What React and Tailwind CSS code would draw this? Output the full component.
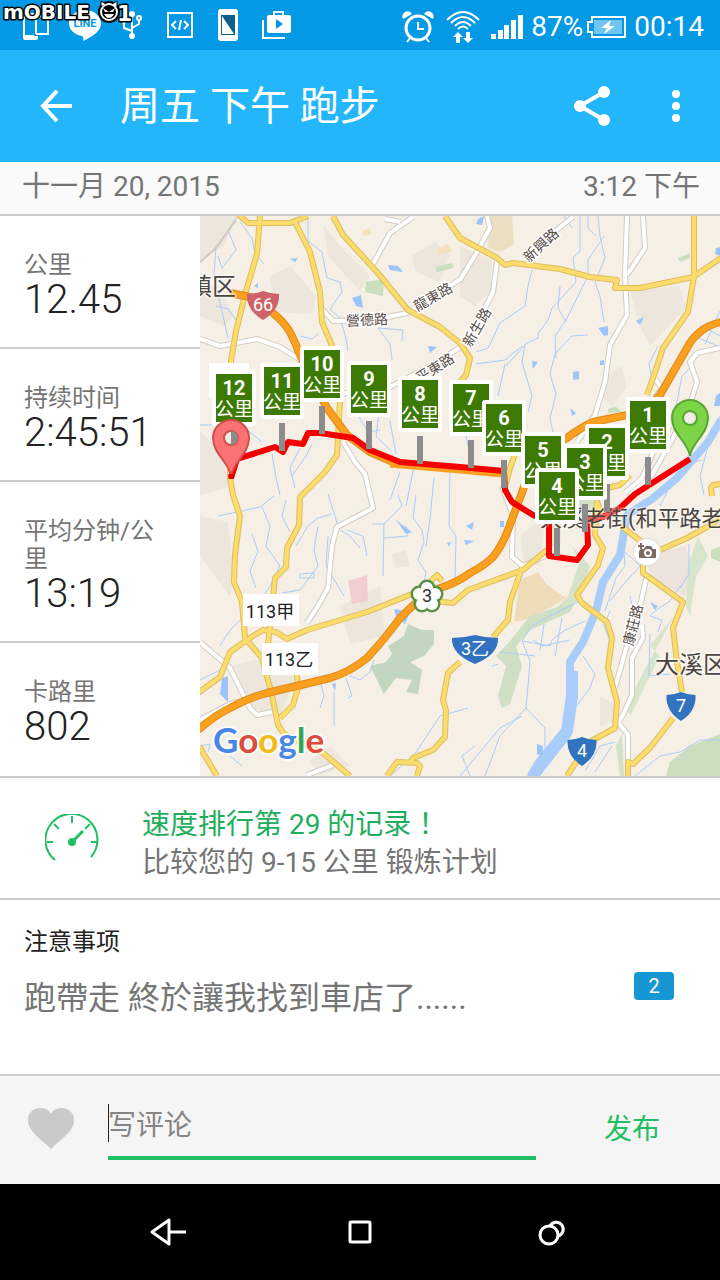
const FONT = 'font-[Roboto,"Noto_Sans_CJK_SC",sans-serif]'

const STATS = [
  { label: '公里', value: '12.45' },
  { label: '持续时间', value: '2:45:51' },
  { label: '平均分钟/公里', value: '13:19' },
  { label: '卡路里', value: '802' },
]

// top left corner of each green kilometre sign, back to front
const SIGNS = [
  { km: 12, x: 16, y: 158 },
  { km: 11, x: 64, y: 151 },
  { km: 10, x: 104, y: 134 },
  { km: 9, x: 151, y: 149 },
  { km: 8, x: 202, y: 164 },
  { km: 7, x: 253, y: 168 },
  { km: 6, x: 286, y: 188 },
  { km: 1, x: 430, y: 185 },
  { km: 2, x: 389, y: 212 },
  { km: 5, x: 325, y: 220 },
  { km: 3, x: 367, y: 232 },
  { km: 4, x: 339, y: 256 },
]

const WHITE_ROADS = [
  'M0 123L20 130L57 123L80 131L102 145',
  'M123 94L133 105L173 104L207 97L235 80L262 62',
  'M173 48L190 17L213 1M185 3L200 6',
  'M143 226L155 246L165 258L173 292L137 311L132 330L128 372L118 390L107 407',
  'M287 0L290 12L277 36L260 64',
  'M297 46L293 76L280 102L262 130L236 147L190 171L140 178',
  'M323 42L350 19L373 1',
  'M427 0L425 59L427 99L410 129L405 166L395 199L377 226',
  'M443 0L445 32L427 59',
  'M520 132L497 137L490 146L497 166L492 182L473 222L452 259L430 279',
  'M470 210L455 232L442 262L425 277',
  'M0 426L30 452L50 492L57 499L72 496',
  'M107 559L133 549',
  'M0 504L30 488L50 483',
  'M447 359L440 390L427 429L415 472',
  'M442 409L443 422L432 442L432 479L423 499L418 506L428 519L428 546',
  'M302 270L313 300L312 341L323 350L345 340',
  'M455 163L462 172L455 182',
]

const YELLOW_ROADS = [
  'M60 0L57 38L46 75L36 115L31 145L30 262L33 279L40 300L35 339L34 366L42 386L45 422L62 442L72 479L78 509L84 518L123 537L150 560',
  'M38 -2L48 7L90 7L108 0',
  'M94 4L110 36L120 76L122 106L133 132L140 186L137 239L125 256L107 274L100 281L99 309L87 332L86 351L75 362L69 419L68 428',
  'M133 0L143 19L177 56L208 94L240 111L260 127L270 142L266 159L255 172',
  'M245 0L260 22L297 42L305 49L313 47L360 53L390 61L417 64L415 72L440 72L493 61L521 42',
  'M494 0L494 60L488 96L463 132L453 162L447 179',
  'M-2 477L20 461L30 436L50 422L63 414L76 416L87 423L107 414L167 396L217 376L230 366L237 359L242 365M234 384L243 386L253 387L268 374L323 354L347 334',
  'M322 352L310 386L308 404L293 421M260 446L248 457L243 484L246 494L245 521L233 534L213 542L210 547M187 560L197 546L217 547L220 550L217 560',
  'M403 300L397 286L395 319L403 332L398 349L377 379L382 387L407 406L412 422L408 452L417 486L415 512L393 524L382 537L367 560',
  'M421 310L442 326L460 334L487 322L507 311L521 302',
  'M443 345L443 357L483 386L473 412L477 446L482 476M473 502L450 532L433 548L428 546L428 560',
  'M512 280L511 272L513 269L521 268',
  'M403 273L420 269L430 259',
  'M316 236L310 252L306 268',
  'M80 502L93 489L98 472L97 459L90 448M98 472L108 467',
  'M-1 530L17 560',
]

const ORANGE_ROADS = [
  'M30 77L50 81Q64 84 73 97Q84 106 90 116Q96 128 100 139L113 166L127 192L147 219L170 236L200 249',
  'M-2 514Q14 500 30 492Q48 482 67 477L130 462Q150 456 167 442Q184 424 200 402Q208 394 217 386Q228 376 243 371Q258 366 270 357Q284 350 293 341Q302 330 308 314L323 274Q328 254 338 245Q350 230 367 222Q380 212 393 206L427 199Q448 194 460 179L487 132Q492 122 500 116Q508 109 521 106',
]

const STREAMS = [
  'M38 0L28 14L36 34L22 52L18 40M40 6L52 22L55 38L64 48M16 30L14 60L28 122M16 90L28 93L36 104',
  'M108 2L108 25L122 36L127 62L140 66L142 76L130 93L140 102L146 122L148 135',
  'M178 112L203 114L202 125M178 112L190 128L192 144M100 120L112 123L118 118',
  'M380 0L380 35L373 42L376 66L352 92L348 104L338 118L338 122L325 128L322 146L332 180L328 196M398 0L400 20L405 42L395 66L400 80L404 106',
  'M404 20L388 44L388 60L366 104L355 120L356 142M360 70L358 92L366 106M388 119L372 120L355 138L350 158L356 178L350 202L353 216',
  'M332 54L328 70L325 90L300 107L288 132L276 136M276 148L305 144L322 130M305 148L298 180M306 150L324 130',
  'M388 0L388 12L396 20M364 0L372 12',
  'M0 209L14 209M52 187L45 212L62 226M72 238L76 262L80 279M100 232L90 252L95 272M112 228L106 240L92 260M150 186L168 216L180 214M180 190L176 220L190 234',
  'M190 205L196 238M214 250L206 290M262 160L250 180L262 196L268 230M234 262L230 302L226 330',
  'M18 300L60 291L74 280M62 291L70 310L66 330L80 350L70 370L60 385M52 318L58 335L50 355L56 372M86 284L82 300L90 316M96 330L108 310L118 302L132 298M118 310L114 334L118 350L100 374L82 377M100 358L114 357L114 362L100 362L100 358',
  'M140 314L150 320L160 332M128 278L138 310M147 314L163 320L167 340M172 308L184 308L183 360M184 308L202 290L198 279M184 322L208 320L206 310',
  'M216 279L213 302L222 314L224 326L218 344L226 356L224 366M250 250L249 310L256 320L255 362M128 320L126 350L144 380M50 395L32 412L26 420L20 430',
  'M0 464L24 452M0 530L10 528L8 536M30 540L42 550M150 460L160 464L170 456L174 444M120 465L124 480L120 492M134 476L134 510M146 462L152 480L148 482',
  'M190 560L215 538L240 500L268 492M380 385L350 400L332 410L322 425L350 430L352 424L365 414L385 405M322 425L330 445L328 470L326 492L345 512L345 538L330 560M326 492L300 520L285 560M362 402L355 440M383 440L395 458L390 472L372 496',
  'M344 408L340 435M300 436L318 438L335 440M260 560L285 530L300 512L322 500M298 448L292 450M333 424L342 430L370 424M410 395L404 410L410 425',
  'M410 385L422 370L440 350L424 335L425 350L416 362L405 395M430 400L432 390L430 380M480 370L470 385L455 395L450 400L462 404L458 416M489 328L489 358L480 372M450 418L449 460L470 458',
  'M520 524L500 524L480 536L460 540L435 560M385 555L400 530L415 526M395 556L412 530M270 560L262 540L275 530',
  'M453 170L449 148L458 130M494 120L520 131M500 110L521 120M505 128L520 95M494 148L482 160L475 196M520 200L508 230L500 260L504 279M460 290L480 250L502 244',
  'M345 290L345 298M200 256L190 284',
]

const PONDS = [
  'M152 82L161 79L163 92L156 90Z', 'M90 43L98 42L95 46Z', 'M188 49L198 50L203 56L190 54Z', 'M228 130L237 131L230 137Z',
  'M398 112L408 110L408 119L404 120Z', 'M436 105L444 101L440 109Z', 'M373 156L379 155L379 163L373 164Z', 'M370 192L376 197L372 200Z',
  'M332 145L338 146L333 153Z', 'M201 308L212 316L206 318L196 304Z', 'M22 462L28 460L28 486L20 478Z', 'M194 393L210 396L205 408L196 400Z',
  'M266 310L274 306L272 314Z', 'M300 305L304 305L304 311L300 311Z', 'M264 324L274 325L266 329Z', 'M337 528L343 530L343 540L337 538Z',
  'M516 32L521 31L521 40L515 38Z', 'M278 3L284 0L282 9L276 8Z', 'M450 386L458 390L455 394Z', 'M132 468L136 467L135 475Z',
  'M516 180L521 176L521 190L514 190Z', 'M400 145L404 144L404 149L400 149Z', 'M54 70L58 67L58 72Z', 'M247 327L251 326L249 331Z',
]

function Shield({ x, y, w, text, fill }) {
  return (
    <g transform={`translate(${x} ${y})`}>
      <path
        d={`M${-w / 2} -11Q${-w / 4} -11 0 -14Q${w / 4} -11 ${w / 2} -11Q${w / 2 + 1} 5 0 15Q${-w / 2 - 1} 5 ${-w / 2} -11Z`}
        fill={fill}
      />
      <text y="6" textAnchor="middle" fontSize="18" fill="#fff">{text}</text>
    </g>
  )
}

function Pin({ x, y, fill, stroke, children }) {
  return (
    <g transform={`translate(${x} ${y})`}>
      <path d="M0 38C-2 24 -18 16 -18 0A18 18 0 1 1 18 0C18 16 2 24 0 38Z" fill={fill} stroke={stroke} strokeWidth="2" />
      <circle r="7" fill="#f1ece4" stroke={stroke} strokeWidth="2" />
      {children}
    </g>
  )
}

function RoadLabel({ x, y, angle, children }) {
  return (
    <text
      transform={`translate(${x} ${y}) rotate(${angle})`}
      y="5" textAnchor="middle" fontSize="14" fill="#5a4b44"
      stroke="#fff" strokeWidth="3" strokeLinejoin="round" paintOrder="stroke"
    >
      {children}
    </text>
  )
}

function RouteMap() {
  return (
    <svg
      className="block h-full w-full" viewBox="0 0 520 560" preserveAspectRatio="xMidYMid slice"
      role="img" aria-label="Google" fontFamily='Roboto, "Noto Sans CJK SC", sans-serif'
    >
      <rect width="520" height="560" fill="#f5efe6" />

      <g fill="#ece6dd">
        <path d="M0 0H36L24 30L0 45Z" />
        <path d="M70 60L90 50L116 80L112 98L76 96Z" />
        <path d="M123 8L140 30L170 60L160 75L128 40Z" />
        <path d="M212 40L235 26L250 38L240 66L215 55Z" />
        <path d="M0 60L20 75L34 100L24 110L0 100Z" />
        <path d="M0 300L28 306L34 360L30 380L0 340Z" />
        <path d="M0 215L24 240L30 270L0 280Z" />
        <path d="M30 450L70 440L96 460L80 500L45 490Z" />
        <path d="M260 30L292 44L290 76L275 90L260 80Z" />
        <path d="M430 75L480 70L486 92L450 130L440 110Z" />
        <path d="M405 160L422 150L426 172L412 190L402 180Z" />
        <path d="M140 390L180 370L185 420L150 428Z" />
        <path d="M192 338L206 334L210 350L195 352Z" />
        <path d="M418 490L400 480L400 510L414 505Z" />
        <path d="M320 320L345 300L340 350L324 345Z" />
        <path d="M110 545L130 530L150 550L120 558Z" />
      </g>
      <path d="M445 340L485 330L490 345L486 380L452 365Z" fill="#ebe3dc" />
      <path d="M290 0H312L314 28L300 36L288 32Z" fill="#eadfc0" />
      <path d="M320 364L338 356L346 368L366 382L350 392L325 404L314 406Z" fill="#eedcb8" />
      <path d="M346 285L362 300L360 330L349 330Z" fill="#e3e6cf" />
      <path d="M236 34L248 28L252 35L240 39ZM162 15L170 12L171 18L164 20Z" fill="#f1e1bd" />
      <path d="M148 365L167 359L168 385L152 388Z" fill="#f1cdd0" />

      <g fill="#c9dfbd">
        <path d="M166 66L184 63L183 80L165 76Z" />
        <path d="M235 51L252 47L254 52L237 56Z" />
        <path d="M478 42L490 37L490 42L480 46Z" />
        <path d="M408 193L415 190L422 196L408 197Z" />
        <path d="M511 334L521 330V346L511 342Z" />
      </g>
      <path d="M170 450L186 446L192 438L188 430L204 420L208 408L222 414L234 414L234 428L224 440L210 446L222 454L218 478L206 476L212 464L196 462L184 478Z" fill="#c3d6bf" />
      <path d="M376 385L330 400L310 425L296 440L306 450L298 480L302 492L310 488L322 450L316 430L330 414L370 396Z" fill="#cfdfc4" />
      <path d="M372 330L380 345L368 380L356 392L378 386L390 350Z" fill="#d6e3ca" />
      <path d="M466 560L470 546L490 530L520 518V560Z" fill="#cbdfc0" />
      <path d="M420 560L416 530L422 518L424 560Z" fill="#d2e2c8" />
      <path d="M498 320L508 340L496 360L490 400L486 390L488 350ZM474 400L450 430L460 440L440 480L430 500L426 490L452 440Z" fill="#d6e5cc" />
      <path d="M374 276L392 266L404 280L390 300L376 296Z" fill="#d5e2c5" />

      <path d="M521 204L508 226L477 262L452 283L427 299L420 339L403 366L396 395L383 426L370 446L370 479L367 519L338 556L334 564" fill="none" stroke="#a9cdfb" strokeWidth="8" strokeLinejoin="round" />
      <path d="M372 455L372 480L367 515L340 548L332 562" fill="none" stroke="#a9cdfb" strokeWidth="12" strokeLinejoin="round" />
      <g fill="none" stroke="#a9cdfa" strokeWidth="1" strokeLinejoin="round">
        {STREAMS.map(d => <path key={d} d={d} />)}
      </g>
      <g fill="#9cc5fb">
        {PONDS.map(d => <path key={d} d={d} />)}
      </g>

      <path d="M0 46L16 32L36 4" fill="none" stroke="#cfcac2" strokeWidth="2" />
      <g fill="none" stroke="#d3ccc2" strokeWidth="6" strokeLinejoin="round">
        {WHITE_ROADS.map(d => <path key={d} d={d} />)}
      </g>
      <g fill="none" stroke="#fff" strokeWidth="4" strokeLinejoin="round">
        {WHITE_ROADS.map(d => <path key={d} d={d} />)}
      </g>
      <g fill="none" stroke="#ddbd5c" strokeWidth="6" strokeLinejoin="round">
        {YELLOW_ROADS.map(d => <path key={d} d={d} />)}
      </g>
      <g fill="none" stroke="#fbdc6c" strokeWidth="4" strokeLinejoin="round">
        {YELLOW_ROADS.map(d => <path key={d} d={d} />)}
      </g>
      <g fill="none" stroke="#e08a1c" strokeWidth="8" strokeLinejoin="round">
        {ORANGE_ROADS.map(d => <path key={d} d={d} />)}
      </g>
      <g fill="none" stroke="#fb9f1f" strokeWidth="6" strokeLinejoin="round">
        {ORANGE_ROADS.map(d => <path key={d} d={d} />)}
      </g>
      <path d="M190 249L260 255L303 259" fill="none" stroke="#fb9f1f" strokeWidth="5" />

      <RoadLabel x={233} y={81} angle={-30}>龍東路</RoadLabel>
      <RoadLabel x={167} y={104} angle={-3}>營德路</RoadLabel>
      <RoadLabel x={235} y={152} angle={-32}>平東路</RoadLabel>
      <RoadLabel x={341} y={29} angle={-43}>新興路</RoadLabel>
      <RoadLabel x={277} y={111} angle={-60}>新生路</RoadLabel>
      <RoadLabel x={433} y={409} angle={-76}>康莊路</RoadLabel>

      <Shield x={63} y={89} w={32} text="66" fill="#cf6268" />
      <Shield x={275} y={433} w={46} text="3乙" fill="#3273c0" />
      <Shield x={481} y={490} w={29} text="7" fill="#3273c0" />
      <Shield x={382} y={535} w={29} text="4" fill="#3273c0" />

      <g transform="translate(227 380)">
        <g fill="#fff" stroke="#5a9142" strokeWidth="3">
          <circle cy="-8" r="7" />
          <circle cx="8" cy="-2" r="7" />
          <circle cx="5" cy="8" r="7" />
          <circle cx="-5" cy="8" r="7" />
          <circle cx="-8" cy="-2" r="7" />
        </g>
        <g fill="#fff">
          <circle cy="-8" r="6" />
          <circle cx="8" cy="-2" r="6" />
          <circle cx="5" cy="8" r="6" />
          <circle cx="-5" cy="8" r="6" />
          <circle cx="-8" cy="-2" r="6" />
          <circle r="8" />
        </g>
        <text y="6" textAnchor="middle" fontSize="18" fill="#333">3</text>
      </g>

      <g fill="#fff">
        <rect x="43" y="378" width="56" height="32" />
        <rect x="62" y="427" width="56" height="32" />
      </g>
      <g fontSize="18" fill="#222" textAnchor="middle">
        <text x="70" y="402">113甲</text>
        <text x="89" y="450">113乙</text>
      </g>

      <g transform="translate(447 336)">
        <circle r="14" fill="#e2dcd6" />
        <circle r="13" fill="#fff" />
        <path d="M-6 -3H-3L-1 -6H4L6 -3H9V6H-8V-1Z" fill="#7a6a62" />
        <circle cx="1" cy="1" r="3" fill="#7a6a62" stroke="#fff" strokeWidth="2" />
        <path d="M-6 -9V-3M-9 -6H-3" stroke="#7a6a62" strokeWidth="2" />
      </g>

      <path
        d="M31 262L37 243L75 231L83 236L88 226L103 228L108 217L120 217L153 222L170 234L200 246L260 251L304 255L305 274L312 286L333 299L349 306L349 340L377 344L388 329L387 304L403 301L420 292L435 278L490 243"
        fill="none" stroke="#f40000" strokeWidth="6" strokeLinejoin="round"
      />

      <g fontSize="24" fill="#4c4440" stroke="#fff" strokeWidth="3" strokeOpacity="0.6" strokeLinejoin="round" paintOrder="stroke">
        <text x="-12" y="79">鎮区</text>
        <text x="455" y="457">大溪区</text>
      </g>
      <text x="340" y="310" fontSize="22" fill="#4c4440" stroke="#fff" strokeWidth="3" strokeOpacity="0.4" paintOrder="stroke">大溪老街(和平路老</text>

      <rect x="9" y="147" width="40" height="34" fill="#fff" />
      {SIGNS.map(({ km, x, y }) => (
        <rect key={km} x={x + 15} y={y + 56} width="6" height="28" fill="#8c8c8c" />
      ))}
      {SIGNS.map(({ km, x, y }) => (
        <g key={km} transform={`translate(${x} ${y})`}>
          <rect x="-4" y="-4" width="44" height="56" rx="3" fill="#fff" />
          <rect width="36" height="48" fill="#3c7a03" />
          <text x="18" y="21" textAnchor="middle" fontSize="20" fontWeight="700" fill="#fff">{km}</text>
          <text x="18" y="42" textAnchor="middle" fontSize="19" fill="#fff">公里</text>
        </g>
      ))}

      <Pin x={31} y={222} fill="#fa7272" stroke="#d24d4d">
        <path d="M0 -7A7 7 0 0 0 0 7Z" fill="#8c8c8c" transform="rotate(180)" />
      </Pin>
      <Pin x={490} y={202} fill="#7bd544" stroke="#5ca336" />
      <path d="M31 258V263" stroke="#d80000" strokeWidth="5" />

      <text
        x="13" y="537" fontSize="35" fontWeight="700" fontFamily="Lato, sans-serif"
        stroke="#fff" strokeWidth="4" strokeOpacity="0.8" strokeLinejoin="round" paintOrder="stroke"
      >
        <tspan fill="#4a86e8">G</tspan>
        <tspan fill="#dd4b3e">o</tspan>
        <tspan fill="#f4b912">o</tspan>
        <tspan fill="#4a86e8">g</tspan>
        <tspan fill="#35a455">l</tspan>
        <tspan fill="#dd4b3e">e</tspan>
      </text>
    </svg>
  )
}

function Watermark() {
  return (
    <svg className="absolute left-0 top-0" width="136" height="28" viewBox="0 0 136 28" role="img" aria-label="Mobile01">
      <g fontFamily='"DejaVu Sans", sans-serif' fontWeight="700" fill="#fff" stroke="#000" strokeWidth="3" strokeLinejoin="round" paintOrder="stroke">
        <text x="3" y="19" fontSize="20">mOBILE</text>
        <text x="117" y="21" fontSize="22">1</text>
      </g>
      <circle cx="109" cy="12" r="10" fill="#fff" stroke="#000" strokeWidth="2" />
      <path d="M101 6L101 1L106 4M112 4L117 1L117 7" fill="#fff" stroke="#000" strokeWidth="1" />
      <circle cx="109" cy="12" r="7" fill="#000" />
      <path d="M103 8L109 12L115 8L113 12H105Z" fill="#fff" />
      <path d="M104 14H114Q112 18 109 18Q106 18 104 14Z" fill="#fff" />
    </svg>
  )
}

function StatusBar() {
  return (
    <div className="relative flex h-[50px] items-center justify-between bg-[#0399e5] pl-[22px] pr-4 text-white">
      <div className="flex items-center gap-[19px]">
        <svg width="28" height="32" viewBox="0 0 28 32" fill="none" stroke="currentColor" strokeWidth="2">
          <path d="M12 27H2V5H14M14 25H26V7H14V25" />
          <path d="M1 27H16V29Q16 31 14 31H3Q1 31 1 29Z" fill="currentColor" stroke="none" />
        </svg>
        <svg width="32" height="32" viewBox="0 0 32 32">
          <path d="M16 1C7 1 0 7 0 14.500C0 21 6 26 13 27Q15 28 14 32Q32 24 32 14.500C32 7 25 1 16 1Z" fill="currentColor" />
          <text x="16" y="18" textAnchor="middle" fontSize="11" fontWeight="700" fontFamily="Roboto, sans-serif" fill="#0399e5">LINE</text>
        </svg>
        <svg width="22" height="28" viewBox="0 0 22 28" fill="none" stroke="currentColor" strokeWidth="2">
          <path d="M12 26V3M12 20L4 17V12M12 17L19 13V8" />
          <circle cx="12" cy="3" r="2" fill="currentColor" />
          <circle cx="12" cy="25" r="2" fill="currentColor" />
          <circle cx="4" cy="11" r="1" fill="currentColor" />
          <circle cx="19" cy="7" r="2" />
        </svg>
        <svg className="ml-[5px]" width="28" height="28" viewBox="0 0 28 28" fill="none" stroke="currentColor" strokeWidth="2">
          <rect x="2" y="2" width="24" height="24" />
          <path d="M10 10L6 14L10 18M18 10L22 14L18 18M15 9L13 19" />
        </svg>
        <svg className="ml-1" width="22" height="32" viewBox="0 0 22 32">
          <rect x="1" width="20" height="32" rx="3" fill="currentColor" />
          <rect x="4" y="6" width="14" height="20" fill="#0e5f8c" />
          <path d="M5 7L17 25H5Z" fill="#fff" />
        </svg>
        <svg className="ml-1" width="30" height="28" viewBox="0 0 30 28">
          <path d="M1 9V27H23" fill="none" stroke="currentColor" strokeWidth="2" />
          <path d="M12 5V1H21V5" fill="none" stroke="currentColor" strokeWidth="2" />
          <rect x="5" y="4" width="24" height="18" rx="2" fill="currentColor" />
          <path d="M14 8L21 13L14 18Z" fill="#0399e5" />
        </svg>
      </div>
      <div className="flex items-center pt-[3px] text-[28px] leading-8">
        <svg className="mr-3" width="32" height="32" viewBox="0 0 32 32" fill="none" stroke="currentColor" strokeWidth="2">
          <circle cx="16" cy="17" r="12" strokeWidth="3" />
          <path d="M16 11V18H22M8 27L5 31M24 27L27 31" />
          <path d="M1 8A5 5 0 0 1 10 3ZM31 8A5 5 0 0 0 22 3Z" fill="currentColor" stroke="none" />
        </svg>
        <svg className="mr-[10px]" width="34" height="34" viewBox="0 0 34 34" fill="none" stroke="currentColor" strokeWidth="2">
          <path d="M1 10Q17 -6 33 10M5 13Q17 1 29 13M9 16Q17 8 25 16M12 19Q17 14 22 19" />
          <path d="M12 22L17 27H14V33H10V27H7ZM22 33L17 28H20V22H24V28H27Z" fill="currentColor" stroke="none" />
        </svg>
        <svg className="mr-2" width="33" height="26" viewBox="0 0 33 26" fill="currentColor">
          <rect x="1" y="20" width="5" height="5" />
          <rect x="8" y="16" width="5" height="9" />
          <rect x="14" y="11" width="5" height="14" />
          <rect x="21" y="6" width="5" height="19" />
          <rect x="28" y="1" width="5" height="24" />
        </svg>
        <span>87%</span>
        <svg className="ml-1 mr-2" width="39" height="22" viewBox="0 0 39 22">
          <path d="M5 1H38V21H5V16H1V6H5Z" fill="none" stroke="currentColor" strokeWidth="2" />
          <rect x="7" y="4" width="28" height="14" fill="#6fc4f0" />
          <path d="M24 4L14 12H20L17 18L28 10H22Z" fill="currentColor" />
        </svg>
        <span>00:14</span>
      </div>
      <Watermark />
    </div>
  )
}

function AppBar() {
  return (
    <header className="flex h-28 items-center bg-[#24b6fa] pl-8 pr-5 text-white">
      <button aria-label="返回" className="flex h-12 w-12 items-center justify-center">
        <svg width="32" height="32" viewBox="0 0 32 32" fill="none" stroke="currentColor" strokeWidth="4">
          <path d="M17 1L3 16L17 31M3 16H32" />
        </svg>
      </button>
      <h1 className="ml-10 flex-1 pt-[2px] text-[40px] leading-[48px]">周五 下午 跑步</h1>
      <button aria-label="分享" className="mr-9 flex h-12 w-12 items-center justify-center">
        <svg width="36" height="40" viewBox="0 0 36 40" fill="currentColor">
          <path d="M30 6L6 20L30 34" fill="none" stroke="currentColor" strokeWidth="4" />
          <circle cx="30" cy="6" r="6" />
          <circle cx="6" cy="20" r="6" />
          <circle cx="30" cy="34" r="6" />
        </svg>
      </button>
      <button aria-label="更多" className="flex h-12 w-12 items-center justify-center">
        <svg width="8" height="32" viewBox="0 0 8 32" fill="currentColor">
          <circle cx="4" cy="4" r="4" />
          <circle cx="4" cy="16" r="4" />
          <circle cx="4" cy="28" r="4" />
        </svg>
      </button>
    </header>
  )
}

function CommentBar() {
  return (
    <form className="flex h-[108px] items-center bg-[#f5f5f5] pl-[27px] pr-[60px]">
      <button type="button" aria-label="赞" className="mb-1">
        <svg width="48" height="42" viewBox="0 0 48 42" fill="#cacaca">
          <path d="M24 42L20 38C8 28 1 22 1 13C1 6 6 1 13 1C18 1 22 3 24 7C26 3 30 1 35 1C42 1 47 6 47 13C47 22 40 28 28 38Z" />
        </svg>
      </button>
      <div className="relative ml-[33px] mr-[68px] flex-1">
        <input
          aria-label="写评论" placeholder="写评论"
          className="block h-[60px] w-full border-b-4 border-[#1fbf64] bg-transparent pb-[6px] text-[28px] leading-10 text-[#222] outline-none placeholder:text-[#858585]"
        />
        <span className="absolute left-0 top-1 h-[38px] w-px bg-[#222]" />
      </div>
      <button type="button" className="text-[28px] leading-10 text-[#1fbf64]">发布</button>
    </form>
  )
}

function NavBar() {
  return (
    <nav className="flex h-24 justify-center gap-24 bg-black text-white">
      <button aria-label="返回键" className="flex w-24 items-center justify-center">
        <svg width="36" height="28" viewBox="0 0 36 28" fill="none" stroke="currentColor" strokeWidth="3" strokeLinejoin="round">
          <path d="M19 2V26L2 14ZM19 14H36" />
        </svg>
      </button>
      <button aria-label="主屏幕" className="flex w-24 items-center justify-center">
        <svg width="24" height="24" viewBox="0 0 24 24" fill="none" stroke="currentColor" strokeWidth="3">
          <rect x="2" y="2" width="20" height="20" rx="1" />
        </svg>
      </button>
      <button aria-label="最近应用" className="flex w-24 items-center justify-center">
        <svg width="28" height="28" viewBox="0 0 28 28" fill="none" stroke="currentColor" strokeWidth="3">
          <circle cx="11" cy="17" r="9" />
          <path d="M12 8A7 7 0 1 1 20 18" />
        </svg>
      </button>
    </nav>
  )
}

export default function App() {
  return (
    <div className={`${FONT} min-h-screen bg-white text-[#222]`}>
      <StatusBar />
      <AppBar />

      <div className="flex h-[54px] items-center justify-between border-b-2 border-[#cccccc] bg-[#fafafa] pb-[2px] pl-[22px] pr-5 text-[28px] leading-9 text-[#757575]">
        <span>十一月 20, 2015</span>
        <span>3:12 下午</span>
      </div>

      <section className="flex border-b-2 border-[#cccccc]">
        <dl className="w-[200px] shrink-0 divide-y-2 divide-[#cccccc]">
          {STATS.map(s => (
            <div key={s.label} className="px-6 pb-[26px] pt-[35px]">
              <dt className="text-2xl leading-7 text-[#757575]">{s.label}</dt>
              <dd className="text-[40px] font-light leading-[42px]">{s.value}</dd>
            </div>
          ))}
        </dl>
        <div className="min-w-0 flex-1">
          <RouteMap />
        </div>
      </section>

      <section className="flex items-center border-b-2 border-[#cccccc] pb-4 pl-[45px] pr-6 pt-7 text-[28px] leading-[38px]">
        <svg className="mb-3 mr-[43px] shrink-0" width="54" height="48" viewBox="0 0 54 48" fill="none" stroke="#21bf65" strokeWidth="2">
          <path d="M10 46A26 26 0 1 1 46 43" />
          <path d="M27 2V9M9 10L14 15M45 10L40 15M2 28H8M46 28H52" />
          <path d="M27 28L38 17" strokeWidth="3" />
          <circle cx="27" cy="28" r="3" fill="#21bf65" />
        </svg>
        <div>
          <p className="text-[#1fae5b]">
            速度排行第 29 的记录<span className='font-["Noto_Sans_CJK_TC",sans-serif] leading-none'>！</span>
          </p>
          <p className="text-[#757575]">比较您的 9-15 公里 锻炼计划</p>
        </div>
      </section>

      <section className="flex items-end justify-between border-b-2 border-[#cccccc] pb-[54px] pl-6 pr-[46px] pt-6">
        <div>
          <h2 className="mb-4 text-2xl leading-9">注意事项</h2>
          <p className="text-[32px] leading-[44px] text-[#757575]">跑帶走 終於讓我找到車店了......</p>
        </div>
        <span className="mb-5 w-10 rounded bg-[#1696d2] text-center text-xl leading-7 text-white">2</span>
      </section>

      <CommentBar />
      <NavBar />
    </div>
  )
}
